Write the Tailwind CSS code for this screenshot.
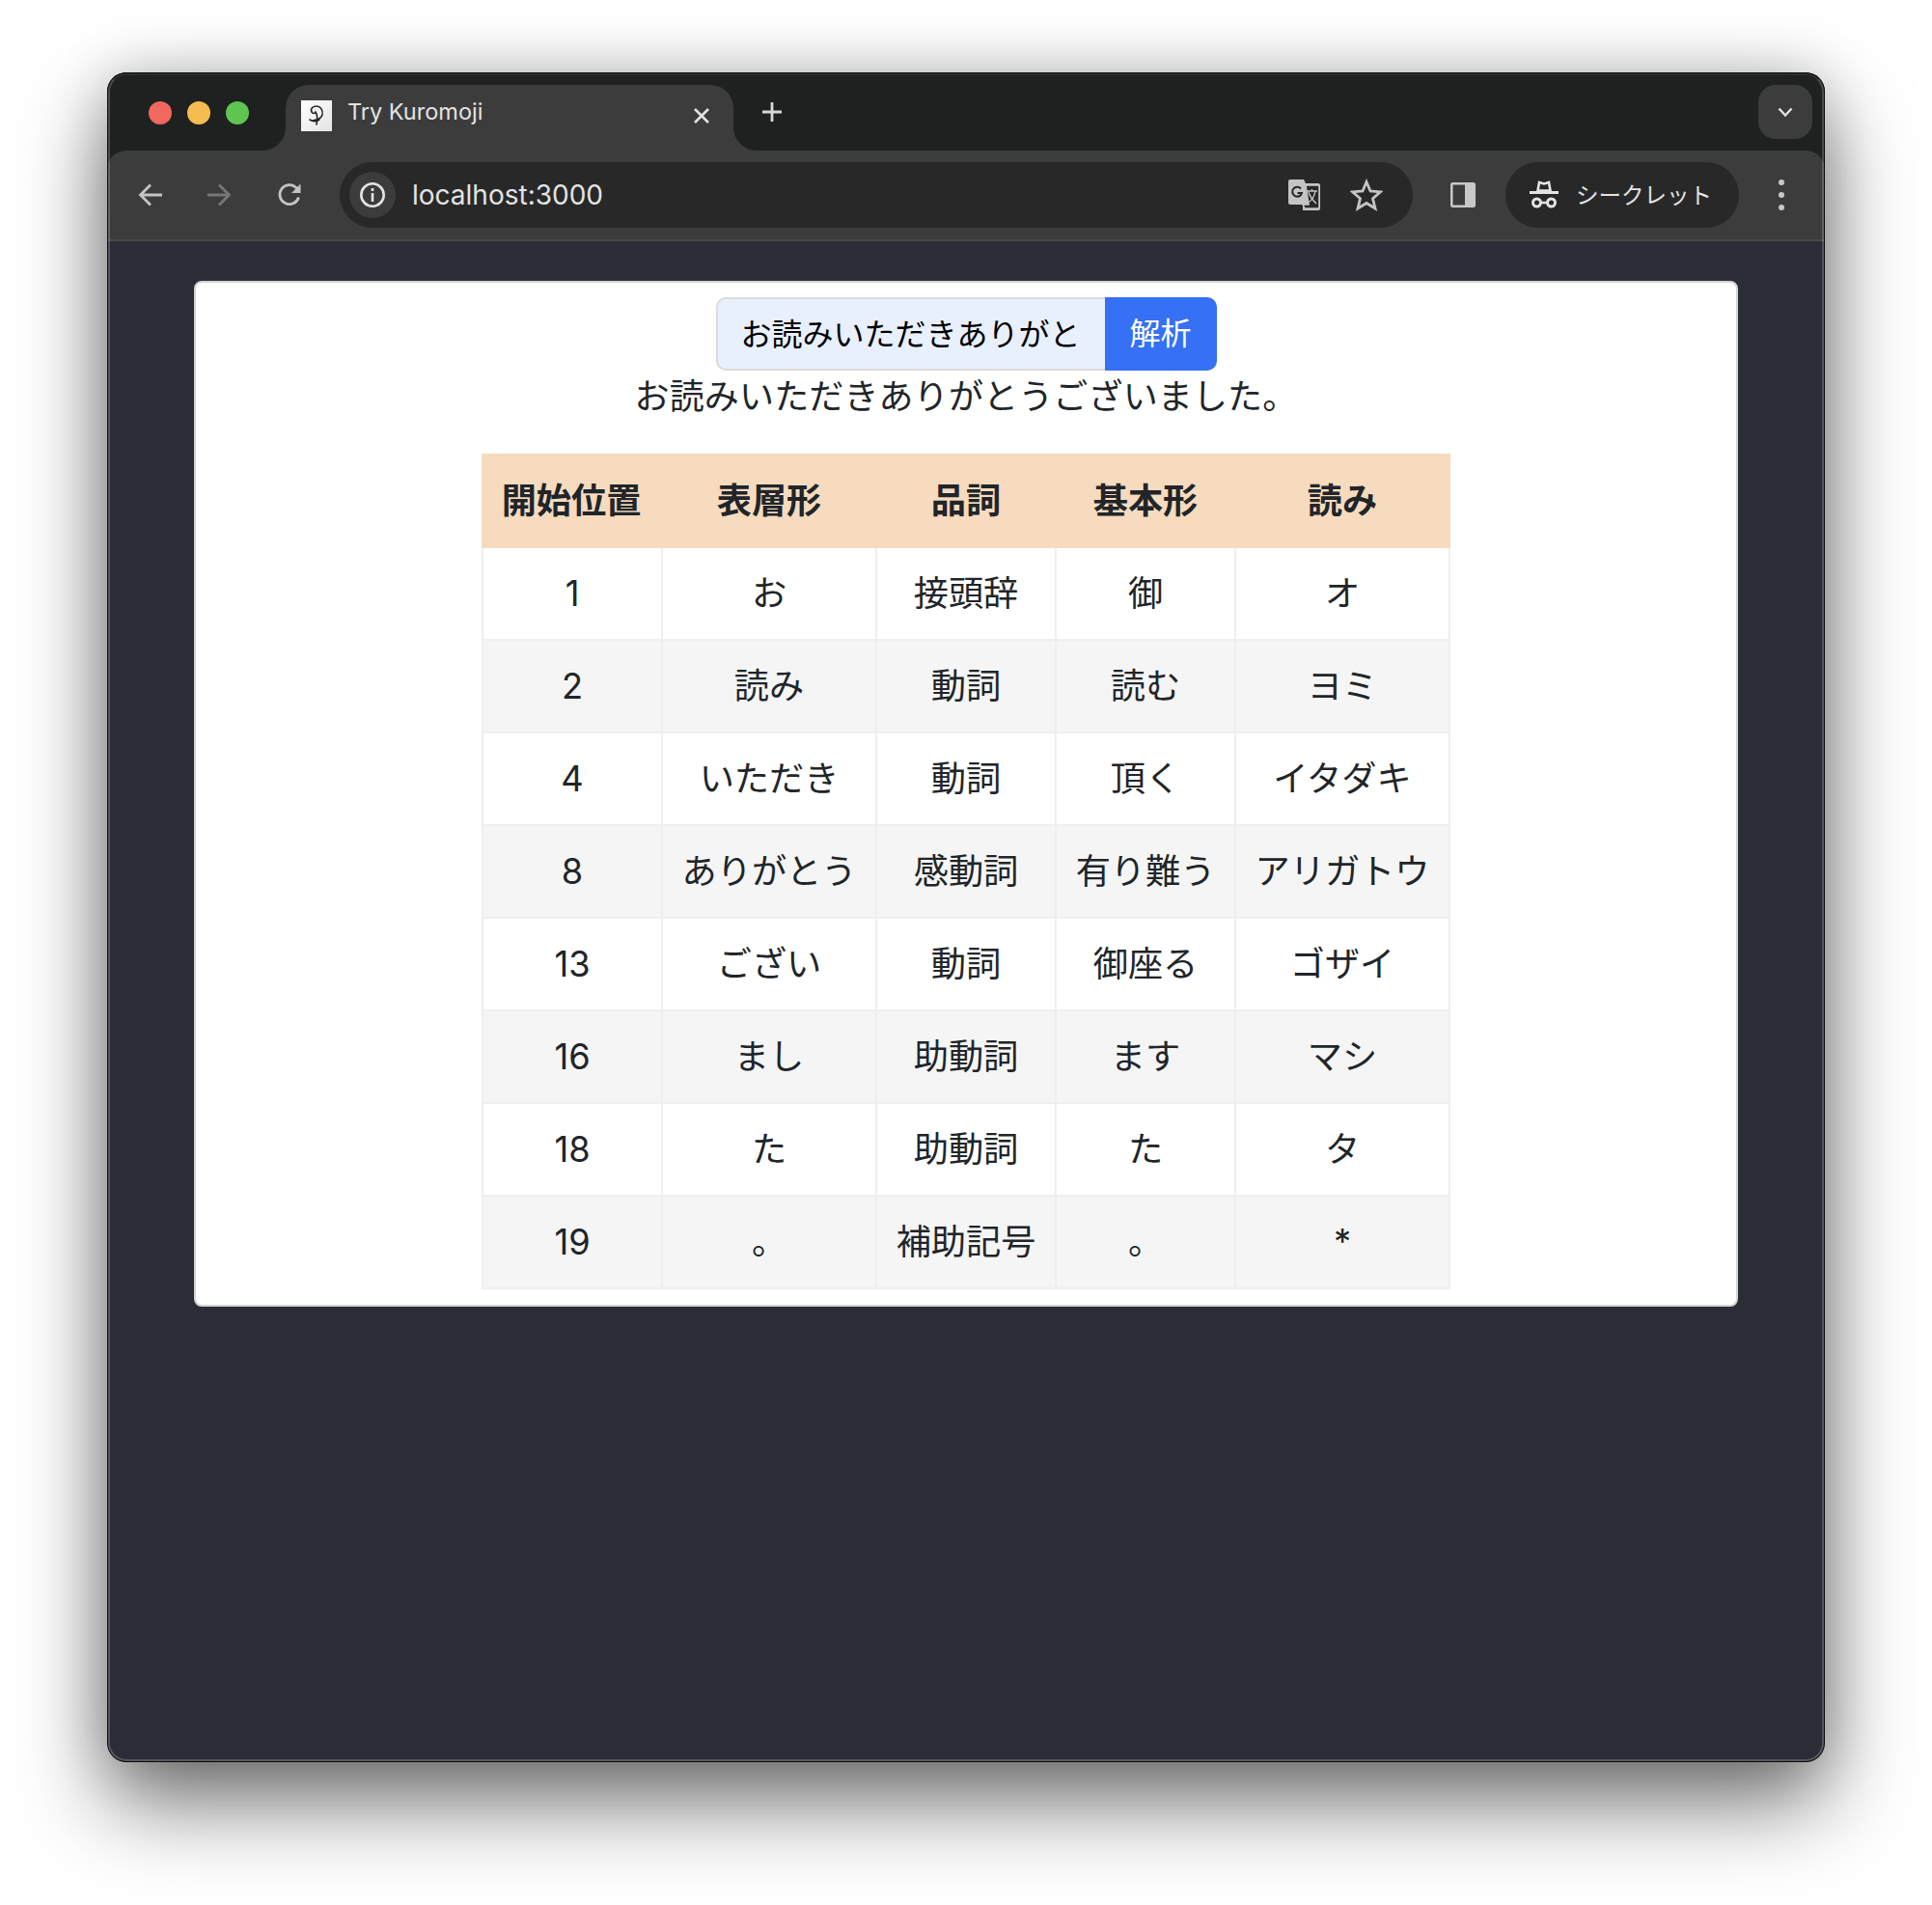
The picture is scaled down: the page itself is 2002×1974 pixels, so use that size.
<!DOCTYPE html>
<html lang="ja">
<head>
<meta charset="utf-8">
<title>Try Kuromoji</title>
<script src="https://cdn.jsdelivr.net/npm/@tailwindcss/browser@4"></script>
</head>
<body class="bg-white w-[2002px] h-[1974px] overflow-hidden font-['Inter','Noto_Sans_CJK_JP',sans-serif]">
<div class="relative ml-[111px] mt-[75px] w-[1780px] h-[1751px] rounded-[20px] bg-[#2a2d35] overflow-hidden shadow-[0_42px_90px_rgba(0,0,0,0.55),0_0_60px_rgba(0,0,0,0.18)]">
  <!-- tab strip -->
  <div class="h-[81px] bg-[#1f2120] flex items-start pt-[13px] pl-[43px] pr-[13px]">
    <div class="flex gap-[16px] mt-[17px] mr-[38px]">
      <span class="block w-[24px] h-[24px] rounded-full bg-[#f0685e]"></span>
      <span class="block w-[24px] h-[24px] rounded-full bg-[#f5bd4f]"></span>
      <span class="block w-[24px] h-[24px] rounded-full bg-[#5ec550]"></span>
    </div>
    <div class="relative w-[464px] h-[68px] bg-[#3c3c3c] rounded-t-[24px] flex items-center pl-[16px] pr-[24px] pb-[4px]">
      <div class="absolute left-[-24px] bottom-0 w-[24px] h-[24px] bg-[#3c3c3c]"><div class="w-full h-full bg-[#1f2120] rounded-br-[24px]"></div></div>
      <div class="absolute right-[-24px] bottom-0 w-[24px] h-[24px] bg-[#3c3c3c]"><div class="w-full h-full bg-[#1f2120] rounded-bl-[24px]"></div></div>
      <div class="w-[32px] h-[32px] bg-gradient-to-br from-white to-[#e4e4e4] flex items-center justify-center shrink-0">
        <svg width="24" height="26" viewBox="0 0 24 26" fill="none" stroke="#222" stroke-width="1.6" stroke-linecap="round"><path d="M7 9C5 5 9 3 12 3c4 0 7 4 6 9-1 3-4 5-10 6"/><path d="M7 9c1 2 3 2 4 0 2 3 2 8 1 13"/><path d="M5 17c3 2 7 2 10 0"/></svg>
      </div>
      <span class="ml-[16px] mb-[9px] text-[23.5px] leading-[32px] text-[#e3e3e3] whitespace-nowrap">Try Kuromoji</span>
      <svg class="ml-auto" width="18" height="18" viewBox="0 0 18 18" stroke="#e3e3e3" stroke-width="2.6"><path d="M2 2l14 14M16 2L2 16"/></svg>
    </div>
    <svg class="ml-[29px] mt-[17px]" width="22" height="22" viewBox="0 0 22 22" stroke="#d8d8d8" stroke-width="2.8"><path d="M11 1v20M1 11h20"/></svg>
    <div class="ml-auto w-[56px] h-[56px] rounded-[18px] bg-[#3c3c3c] flex items-center justify-center">
      <svg width="16" height="11" viewBox="0 0 16 11" fill="none" stroke="#e3e3e3" stroke-width="2.4"><path d="M1.500 1.500L8 8.500l6.500-7"/></svg>
    </div>
  </div>
  <!-- toolbar -->
  <div class="h-[94px] bg-[#1f2120]">
    <div class="h-full bg-[#3c3c3c] rounded-t-[20px] border-b-2 border-[#4a4a4a] flex items-center">
      <svg class="ml-[32px]" width="26" height="26" viewBox="0 0 26 26" fill="none" stroke="#c4c4c4" stroke-width="2.800"><path d="M25 13H3M13 2.500L2.500 13 13 23.500"/></svg>
      <svg class="ml-[45px]" width="26" height="26" viewBox="0 0 26 26" fill="none" stroke="#777" stroke-width="2.800"><path d="M1 13h22M13 2.500L23.500 13 13 23.500"/></svg>
      <svg class="ml-[47px]" width="26" height="26" viewBox="0 0 26 26" fill="none" stroke="#c4c4c4" stroke-width="2.800"><path d="M22.500 15.500A10 10 0 1 1 20 5.500L23 9"/><path d="M24.500 1.500v9.500H15z" fill="#c4c4c4" stroke="none"/></svg>
      <div class="ml-[39px] w-[1112px] h-[68px] rounded-full bg-[#282828] flex items-center pl-[10px]">
        <div class="w-[48px] h-[48px] rounded-full bg-[#3c3c3c] flex items-center justify-center">
          <svg width="28" height="28" viewBox="0 0 28 28" fill="none" stroke="#e3e3e3" stroke-width="2.600"><circle cx="14" cy="14" r="11.700"/><path d="M14 12v9M14 7v3"/></svg>
        </div>
        <span class="ml-[17px] text-[28px] text-[#e3e3e3]">localhost:3000</span>
        <svg class="ml-auto mr-[-1px]" width="34" height="34" viewBox="0 0 34 34"><path d="M2 1h14l2 4h13a2 2 0 0 1 2 2v24a2 2 0 0 1-2 2H15v-6H2a2 2 0 0 1-2-2V3a2 2 0 0 1 2-2z" fill="#c4c4c4"/><path d="M18 7h13a1 1 0 0 1 1 1v22a1 1 0 0 1-1 1H17l-2-4h6z" fill="#282828" stroke="#c4c4c4" stroke-width="1.600"/><path d="M13 10.500a5 5 0 1 0 1 4.500H9.500" fill="none" stroke="#282828" stroke-width="2"/><path d="M19 13h11M24.500 11v2M28 13c-1 6-4 10-8 12M21 14c1 4 4 8 8 12" fill="none" stroke="#c4c4c4" stroke-width="1.400"/></svg>
        <svg class="ml-[31px] mr-[31px]" width="34" height="34" viewBox="0 0 34 34" fill="none" stroke="#c4c4c4" stroke-width="2.800"><path d="M17 3.500l4 9.500 10.500.9-8 6.800 2.500 10.300L17 25.500 8 31l2.500-10.300-8-6.800 10.500-.9z"/></svg>
      </div>
      <svg class="ml-[38px]" width="28" height="28" viewBox="0 0 28 28"><rect x="1" y="1" width="26" height="26" rx="2.500" fill="#c8c8c8"/><rect x="3.500" y="3.500" width="12.500" height="21" fill="#3c3c3c"/></svg>
      <div class="ml-[30px] w-[242px] h-[68px] rounded-full bg-[#282828] flex items-center pl-[25px]">
        <svg width="30" height="32" viewBox="0 0 30 32" fill="none" stroke="#e3e3e3"><path d="M8.500 11.500L10 3l5 1.500L20 3l1.500 8.500z" stroke-width="2.600"/><path d="M0 13.500h30" stroke-width="3"/><circle cx="7.500" cy="24" r="4" stroke-width="3"/><circle cx="22.500" cy="24" r="4" stroke-width="3"/><path d="M11.500 24h7" stroke-width="2.600"/></svg>
        <span class="ml-[18px] text-[23.5px] text-[#e3e3e3] whitespace-nowrap font-['Noto_Sans_CJK_JP',sans-serif]">シークレット</span>
      </div>
      <div class="ml-[41px] flex flex-col gap-[7px]">
        <span class="block w-[6px] h-[6px] rounded-full bg-[#c8c8c8]"></span>
        <span class="block w-[6px] h-[6px] rounded-full bg-[#c8c8c8]"></span>
        <span class="block w-[6px] h-[6px] rounded-full bg-[#c8c8c8]"></span>
      </div>
    </div>
  </div>
  <!-- page -->
  <div class="pt-[41px] pl-[90px]">
    <div class="w-[1600px] h-[1063px] bg-white rounded-[8px] border-2 border-[#d4d4d4] flex flex-col items-center pt-[15px] text-[#212529] font-['Inter','Noto_Sans_CJK_JP',sans-serif]">
      <div class="flex h-[76px]">
        <input class="w-[403px] h-full rounded-l-[10px] border-2 border-r-0 border-[#dbdbdb] bg-[#e8f0fe] pl-[24px] pr-[26px] pb-[5px] text-[32px] text-black outline-none" value="お読みいただきありがとうございました。">
        <button class="w-[116px] h-full rounded-r-[10px] bg-[#3570f5] text-white text-[32px]">解析</button>
      </div>
      <p class="text-[36px] leading-[52px] mt-[1px] mb-[33px] tracking-[0.15px]">お読みいただきありがとうございました。</p>
      <table class="table-fixed w-[1004px] border-separate border-spacing-0 text-[36.2px] text-center leading-[52px] text-[#212529]">
        <colgroup><col class="w-[188px]"><col class="w-[222px]"><col class="w-[186px]"><col class="w-[186px]"><col class="w-[222px]"></colgroup>
        <thead class="bg-[#f6dbbf]">
          <tr class="h-[98px] font-bold [&_th]:pr-[2px]"><th>開始位置</th><th>表層形</th><th>品詞</th><th>基本形</th><th>読み</th></tr>
        </thead>
        <tbody class="[&_td]:border-b-2 [&_td]:border-r-2 [&_td:first-child]:border-l-2 [&_td]:border-[#efefef] [&_td]:h-[96px] [&_td]:p-0">
          <tr><td>1</td><td>お</td><td>接頭辞</td><td>御</td><td>オ</td></tr>
          <tr class="bg-[#f5f5f5]"><td>2</td><td>読み</td><td>動詞</td><td>読む</td><td>ヨミ</td></tr>
          <tr><td>4</td><td>いただき</td><td>動詞</td><td>頂く</td><td>イタダキ</td></tr>
          <tr class="bg-[#f5f5f5]"><td>8</td><td>ありがとう</td><td>感動詞</td><td>有り難う</td><td>アリガトウ</td></tr>
          <tr><td>13</td><td>ござい</td><td>動詞</td><td>御座る</td><td>ゴザイ</td></tr>
          <tr class="bg-[#f5f5f5]"><td>16</td><td>まし</td><td>助動詞</td><td>ます</td><td>マシ</td></tr>
          <tr><td>18</td><td>た</td><td>助動詞</td><td>た</td><td>タ</td></tr>
          <tr class="bg-[#f5f5f5]"><td>19</td><td>。</td><td>補助記号</td><td>。</td><td>*</td></tr>
        </tbody>
      </table>
    </div>
  </div>
  <div class="absolute inset-0 rounded-[20px] border border-[#0c0c0c] pointer-events-none">
    <div class="w-full h-full rounded-[19px] border-2 border-white/20 [border-top-color:rgba(255,255,255,0.06)]"></div>
  </div>
</div>
</body>
</html>
